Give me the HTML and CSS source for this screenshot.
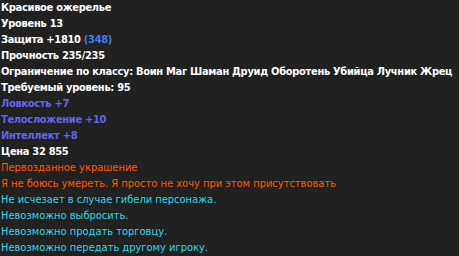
FILE: index.html
```html
<!DOCTYPE html>
<html lang="ru">
<head>
    <meta charset="UTF-8">
    <title>Красивое ожерелье</title>
    <link rel="stylesheet" href="styles.css">
</head>
<body>
  <div class="tooltip">
    <div class="line bold">Красивое ожерелье</div>
    <div class="line bold">Уровень 13</div>
    <div class="line bold">Защита +1810 <span class="bonus">(348)</span></div>
    <div class="line bold">Прочность 235/235</div>
    <div class="line bold">Ограничение по классу: Воин Маг Шаман Друид Оборотень Убийца Лучник Жрец</div>
    <div class="line bold">Требуемый уровень: 95</div>
    <div class="line stat">Ловкость +7</div>
    <div class="line stat">Телосложение +10</div>
    <div class="line stat">Интеллект +8</div>
    <div class="line bold">Цена 32 855</div>
    <div class="line orange">Первозданное украшение</div>
    <div class="line orange">Я не боюсь умереть. Я просто не хочу при этом присутствовать</div>
    <div class="line cyan">Не исчезает в случае гибели персонажа.</div>
    <div class="line cyan">Невозможно выбросить.</div>
    <div class="line cyan">Невозможно продать торговцу.</div>
    <div class="line cyan">Невозможно передать другому игроку.</div>
  </div>
</body>
</html>
```

FILE: styles.css
```css
html, body{
    margin: 0;
    padding: 0;
    background-color: #212121;
}

.tooltip{
    font-family: "DejaVu Sans Condensed", "DejaVu Sans", sans-serif;
    font-stretch: condensed;
    font-size: 11px;
    color: #ffffff;
    padding: 0 0 0 1px;
}

.line{
    height: 16px;
    line-height: 16px;
    white-space: nowrap;
}

.bold{
    font-weight: bold;
    letter-spacing: -0.3px;
}

.bonus{
    color: #3d7ff0;
}

.stat{
    color: #6565e6;
    font-weight: bold;
    letter-spacing: -0.3px;
}

.orange{
    color: #ff5a00;
}

.cyan{
    color: #33d6e6;
}
```
